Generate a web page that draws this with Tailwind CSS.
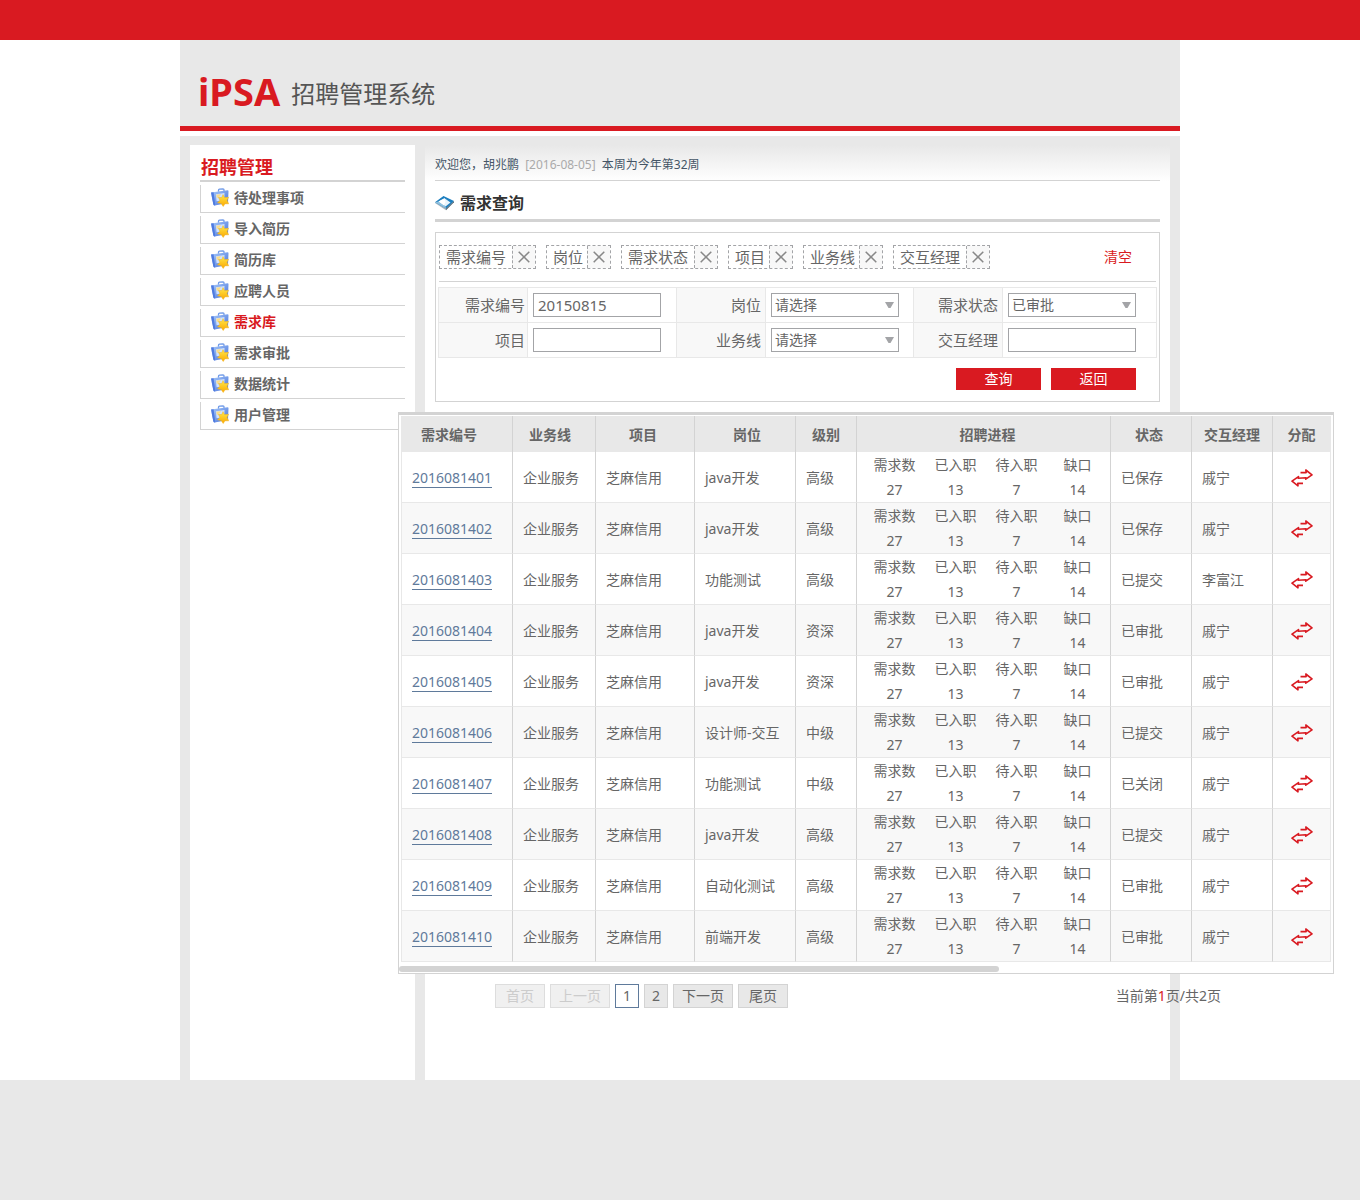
<!DOCTYPE html>
<html lang="zh-CN">
<head>
<meta charset="utf-8">
<meta name="viewport" content="width=device-width, initial-scale=1">
<title>iPSA 招聘管理系统</title>
<script src="https://cdn.jsdelivr.net/npm/@tailwindcss/browser@4"></script>
</head>
<body class="flex min-h-screen flex-col overflow-x-hidden bg-white font-['Noto_Sans','Noto_Sans_CJK_SC',sans-serif] text-sm leading-5 text-[#666]">

<!-- Shared icons -->
<svg class="absolute h-0 w-0" aria-hidden="true">
  <defs>
    <linearGradient id="folderBlue" x1="0" y1="0" x2="1" y2="1">
      <stop offset="0" stop-color="#a9cbfb"/><stop offset="1" stop-color="#4570d8"/>
    </linearGradient>
    <linearGradient id="starGold" x1="0" y1="0" x2="0" y2="1">
      <stop offset="0" stop-color="#ffe94a"/><stop offset="1" stop-color="#fba800"/>
    </linearGradient>
  </defs>
  <symbol id="folder" viewBox="0 0 20 20">
    <path d="M8.500 3.800V2.200Q8.500 1.300 9.500 1.200L13 .9Q14 .9 14 1.800V3.200" fill="none" stroke="#6f9ae8" stroke-width="1.300"/>
    <path d="M1 4.500 17.600 2.200Q18.500 2.200 18.500 3L18 15 4.500 17.500Q3.600 17.400 3.300 16.300Z" fill="url(#folderBlue)"/>
    <path d="M1 4.500 3.600 4.200 5.300 17.300 4.300 17.400Q3.500 17 3.300 16.300Z" fill="#4f7be0"/>
    <path d="M5.800 6.200 14.500 5 14.200 12 6.600 13.200Z" fill="#cfe2ff"/>
    <path d="M6.300 6.700 11 6.100 9 9.500 6.700 9.800Z" fill="#f8dc8c"/>
    <path d="M13 6.600 14.500 9.600 18.600 9.300 17 12.200 18.700 15.800 15 15.800 13.200 18.500 11.200 15.600 7.500 14.800 10 12.200 8.500 9.500 11.800 9.500Z" fill="url(#starGold)" stroke="#f3b21c" stroke-width=".5"/>
  </symbol>
  <symbol id="swap" viewBox="0 0 22 18">
    <path d="M9.500 3.600H15.200L14.800 1 21 5.900 14.800 10.200 15 8.800 7.200 9.200 7.500 7.600 1 12.200 7 16.800 6.800 14.400H12" fill="none" stroke="#d91a21" stroke-width="1.600" stroke-linejoin="round"/>
  </symbol>
  <symbol id="cross" viewBox="0 0 12 12">
    <path d="M.7.7 11.300 11.300M11.300.7.7 11.300" fill="none" stroke="#888" stroke-width="1.500"/>
  </symbol>
  <symbol id="caret" viewBox="0 0 9 6"><path d="M0 0H9L5.500 6H3.500Z" fill="#a3a4a7"/></symbol>
</svg>

<div class="h-10 bg-[#d91a21]"></div>

<div class="mx-auto w-full max-w-[1000px]">
  <header class="mb-[5px] border-b-[5px] border-[#d91a21] bg-[#e8e8e8] pb-[7px] pl-[18px] pt-[23px]">
    <h1 class="flex items-end gap-[11px]">
      <span class="font-['Noto_Sans'] text-[38px] leading-[56px] font-bold text-[#d91a21]">iPSA</span>
      <span class="text-2xl leading-[50px] text-[#555]">招聘管理系统</span>
    </h1>
  </header>

  <div class="flex gap-[10px] bg-[#e8e8e8] px-[10px] pt-[9px]">
    <aside class="w-[225px] shrink-0 bg-white px-[10px] pt-[10px]">
      <h2 class="border-b-2 border-[#d3d3d3] pl-px text-lg leading-[25px] font-bold text-[#d91a21]">招聘管理</h2>
      <nav id="menu" class="mt-[3px] flex flex-col gap-[3px]"></nav>
    </aside>

    <main class="min-w-0 flex-1 bg-white pb-[72px]">
      <div class="bg-linear-to-b from-[#e8e8e8] to-white px-[10px] pt-[10px]">
        <p class="border-b border-[#d3d3d3] pb-[5px] text-xs leading-5 text-[#456]">欢迎您，胡兆鹏 <span class="px-[3px] text-[#aaa]">[2016-08-05]</span> 本周为今年第32周</p>
      </div>

      <div class="px-[10px]">
        <h2 class="flex h-[41px] items-center gap-[5px] border-b-3 border-[#d3d3d3] pt-[6px] text-base font-bold text-[#333]">
          <svg class="h-[16px] w-5" viewBox="0 0 20 16" aria-hidden="true">
            <path d="M0 8 8.500 1.500 19 7 11 15.300Z" fill="#a8b4bd"/>
            <path d="M0 7.300 8.500 1 19 6 11 13.500Z" fill="#1c7fc0"/>
            <path d="M3.500 6.500 9.500 3.300 15.500 7.500 10.500 11.500Z" fill="#e9f4fb"/>
            <path d="M0 7.300 3.500 6.500 10.500 11.500 11 13.500Z" fill="#8fc0de"/>
            <path d="M3.500 6.500 9.500 3.300 10.500 6.800 9 10.400Z" fill="#fff"/>
            <path d="M11 13.500 19 6 19 7.300 11 15.300Z" fill="#5d7280"/>
          </svg>
          需求查询
        </h2>

        <form id="search" class="mt-[10px] border border-[#d3d3d3] px-[2px] pb-[11px]">
          <div class="mx-px flex items-center justify-between border-b border-[#d3d3d3] py-3">
            <ul id="tags" class="flex gap-[10px]"></ul>
            <button type="reset" class="mr-6 text-sm leading-5 text-[#d91a21]">清空</button>
          </div>

          <div class="mt-[5px] grid grid-cols-[89px_149px_89px_148px_89px_1fr] border-l border-t border-[#e8e8e8] text-[15px]">
            <label for="code" class="border-b border-r border-[#e8e8e8] bg-[#f8f8f8] pr-[2px] text-right leading-[34px]">需求编号</label>
            <div class="h-[35px] border-b border-r border-[#e8e8e8] p-[5px]"><input id="code" type="text" value="20150815" class="block h-6 w-32 border border-[#a3a4a7] bg-white pl-1 text-[15px]"></div>
            <label for="post" class="border-b border-r border-[#e8e8e8] bg-[#f8f8f8] pr-1 text-right leading-[34px]">岗位</label>
            <div class="border-b border-r border-[#e8e8e8] p-[5px]">
              <div class="relative w-32">
                <select id="post" class="block h-6 w-full appearance-none border border-[#a3a4a7] bg-white pl-[3px] text-sm leading-5"><option>请选择</option></select>
                <svg class="pointer-events-none absolute right-[5px] top-[9px] h-[6px] w-[9px]" aria-hidden="true"><use href="#caret"/></svg>
              </div>
            </div>
            <label for="state" class="border-b border-r border-[#e8e8e8] bg-[#f8f8f8] pr-1 text-right leading-[34px]">需求状态</label>
            <div class="border-b border-r border-[#e8e8e8] p-[5px]">
              <div class="relative w-32">
                <select id="state" class="block h-6 w-full appearance-none border border-[#a3a4a7] bg-white pl-[3px] text-sm leading-5"><option>已审批</option></select>
                <svg class="pointer-events-none absolute right-[5px] top-[9px] h-[6px] w-[9px]" aria-hidden="true"><use href="#caret"/></svg>
              </div>
            </div>
            <label for="project" class="border-b border-r border-[#e8e8e8] bg-[#f8f8f8] pr-[2px] text-right leading-[34px]">项目</label>
            <div class="h-[35px] border-b border-r border-[#e8e8e8] p-[5px]"><input id="project" type="text" class="block h-6 w-32 border border-[#a3a4a7] bg-white pl-1 text-[15px]"></div>
            <label for="line" class="border-b border-r border-[#e8e8e8] bg-[#f8f8f8] pr-1 text-right leading-[34px]">业务线</label>
            <div class="border-b border-r border-[#e8e8e8] p-[5px]">
              <div class="relative w-32">
                <select id="line" class="block h-6 w-full appearance-none border border-[#a3a4a7] bg-white pl-[3px] text-sm leading-5"><option>请选择</option></select>
                <svg class="pointer-events-none absolute right-[5px] top-[9px] h-[6px] w-[9px]" aria-hidden="true"><use href="#caret"/></svg>
              </div>
            </div>
            <label for="manager" class="border-b border-r border-[#e8e8e8] bg-[#f8f8f8] pr-1 text-right leading-[34px]">交互经理</label>
            <div class="border-b border-r border-[#e8e8e8] p-[5px]"><input id="manager" type="text" class="block h-6 w-32 border border-[#a3a4a7] bg-white pl-1 text-[15px]"></div>
          </div>

          <div class="mt-[10px] flex justify-end gap-[10px] pr-[21px] text-white">
            <button type="submit" class="h-[22px] w-[85px] bg-[#d91a21]">查询</button>
            <button type="button" class="h-[22px] w-[85px] bg-[#d91a21]">返回</button>
          </div>
        </form>
      </div>

      <!-- Result panel is wider than the column and extends over both of its edges -->
      <div class="relative -ml-[27px] mt-[10px] w-[936px]">
        <div class="border border-t-3 border-[#d3d3d3] bg-white pt-px">
          <div class="px-[2px]">
            <table class="w-full table-fixed border-separate border-spacing-0 border-l border-[#e8e8e8]">
              <colgroup>
                <col class="w-[111px]"><col class="w-[83px]"><col class="w-[99px]"><col class="w-[101px]"><col class="w-[61px]"><col class="w-[254px]"><col class="w-[81px]"><col class="w-[81px]"><col>
              </colgroup>
              <thead>
                <tr class="h-9 bg-[#e8e8e8]">
                  <th class="border-r border-[#d3d3d3] pt-[2px] pr-4">需求编号</th>
                  <th class="border-r border-[#d3d3d3] pt-[2px] pr-2">业务线</th>
                  <th class="border-r border-[#d3d3d3] pt-[2px] pr-1">项目</th>
                  <th class="border-r border-[#d3d3d3] pt-[2px] pl-1">岗位</th>
                  <th class="border-r border-[#d3d3d3] pt-[2px]">级别</th>
                  <th class="border-r border-[#d3d3d3] pt-[2px] pl-2">招聘进程</th>
                  <th class="border-r border-[#d3d3d3] pt-[2px] pr-1">状态</th>
                  <th class="border-r border-[#d3d3d3] pt-[2px]">交互经理</th>
                  <th class="border-r border-[#e8e8e8] pt-[2px]">分配</th>
                </tr>
              </thead>
              <tbody id="rows"></tbody>
            </table>
          </div>
          <div class="mt-1 pb-px"><div class="h-[6px] w-[600px] rounded-full bg-[#d3d3d3]"></div></div>
        </div>

        <div class="mt-[10px] flex items-center justify-between pl-[97px] pr-[113px]">
          <nav class="flex gap-[5px]" aria-label="分页">
            <button type="button" disabled class="h-6 w-[50px] border border-[#ddd] bg-[#f0f0f0] text-[#ccc]">首页</button>
            <button type="button" disabled class="h-6 w-[60px] border border-[#ddd] bg-[#f0f0f0] text-[#ccc]">上一页</button>
            <button type="button" class="h-6 w-6 border border-[#5f7a9b] bg-white">1</button>
            <button type="button" class="h-6 w-6 border border-[#d3d3d3] bg-[#e8e8e8]">2</button>
            <button type="button" class="h-6 w-[60px] border border-[#d3d3d3] bg-[#e8e8e8]">下一页</button>
            <button type="button" class="h-6 w-[50px] border border-[#d3d3d3] bg-[#e8e8e8]">尾页</button>
          </nav>
          <p class="whitespace-nowrap">当前第<span class="text-[#d91a21]">1</span>页/共2页</p>
        </div>
      </div>
    </main>
  </div>
</div>

<footer class="min-h-[120px] flex-1 bg-[#e8e8e8]"></footer>

<script>
const menu = ['待处理事项', '导入简历', '简历库', '应聘人员', '需求库', '需求审批', '数据统计', '用户管理'];
document.getElementById('menu').innerHTML = menu.map(name => `
  <a href="#" class="flex h-7 items-center gap-1 border-b border-l border-[#d3d3d3] pb-px pl-[9px] font-bold ${name === '需求库' ? 'text-[#d91a21]' : 'text-[#666]'}">
    <svg class="h-5 w-5" aria-hidden="true"><use href="#folder"/></svg>${name}</a>`).join('');

const tagWidth = { 2: 'w-[40px]', 3: 'w-[55px]', 4: 'w-[72px]' };
document.getElementById('tags').innerHTML = ['需求编号', '岗位', '需求状态', '项目', '业务线', '交互经理'].map(name => `
  <li class="flex h-6 border border-dashed border-[#a3a4a7] text-[15px] leading-[22px]">
    <span class="${tagWidth[name.length]} whitespace-nowrap pl-[6px]">${name}</span>
    <button type="button" aria-label="移除${name}" class="flex w-[23px] items-center justify-center border-l border-dashed border-[#a3a4a7] bg-[#f8f8f8]"><svg class="h-3 w-3"><use href="#cross"/></svg></button>
  </li>`).join('');

const rows = [
  ['01', 'java开发', '高级', '已保存', '戚宁'],
  ['02', 'java开发', '高级', '已保存', '戚宁'],
  ['03', '功能测试', '高级', '已提交', '李富江'],
  ['04', 'java开发', '资深', '已审批', '戚宁'],
  ['05', 'java开发', '资深', '已审批', '戚宁'],
  ['06', '设计师-交互', '中级', '已提交', '戚宁'],
  ['07', '功能测试', '中级', '已关闭', '戚宁'],
  ['08', 'java开发', '高级', '已提交', '戚宁'],
  ['09', '自动化测试', '高级', '已审批', '戚宁'],
  ['10', '前端开发', '高级', '已审批', '戚宁'],
];
const cell = 'border-b border-r border-b-[#e8e8e8] border-r-[#d3d3d3] pl-[10px] pt-[2px]';
document.getElementById('rows').innerHTML = rows.map(([no, post, level, state, manager]) => `
  <tr class="h-[51px] even:bg-[#f8f8f8]">
    <td class="${cell}"><a href="#" class="border-b border-[#5f7a9b] text-[#5f7a9b]">20160814${no}</a></td>
    <td class="${cell}">企业服务</td>
    <td class="${cell}">芝麻信用</td>
    <td class="${cell}">${post}</td>
    <td class="${cell}">${level}</td>
    <td class="border-b border-r border-b-[#e8e8e8] border-r-[#d3d3d3] pl-[7px]">
      <dl class="grid grid-cols-[repeat(4,61px)] text-center leading-[25px]">
        <div><dt>需求数</dt><dd>27</dd></div><div><dt>已入职</dt><dd>13</dd></div><div><dt>待入职</dt><dd>7</dd></div><div><dt>缺口</dt><dd>14</dd></div>
      </dl>
    </td>
    <td class="${cell}">${state}</td>
    <td class="${cell}">${manager}</td>
    <td class="border-b border-r border-[#e8e8e8] pt-[2px]"><button type="button" aria-label="分配" class="mx-auto block"><svg class="h-[18px] w-[22px]"><use href="#swap"/></svg></button></td>
  </tr>`).join('');
</script>
</body>
</html>
